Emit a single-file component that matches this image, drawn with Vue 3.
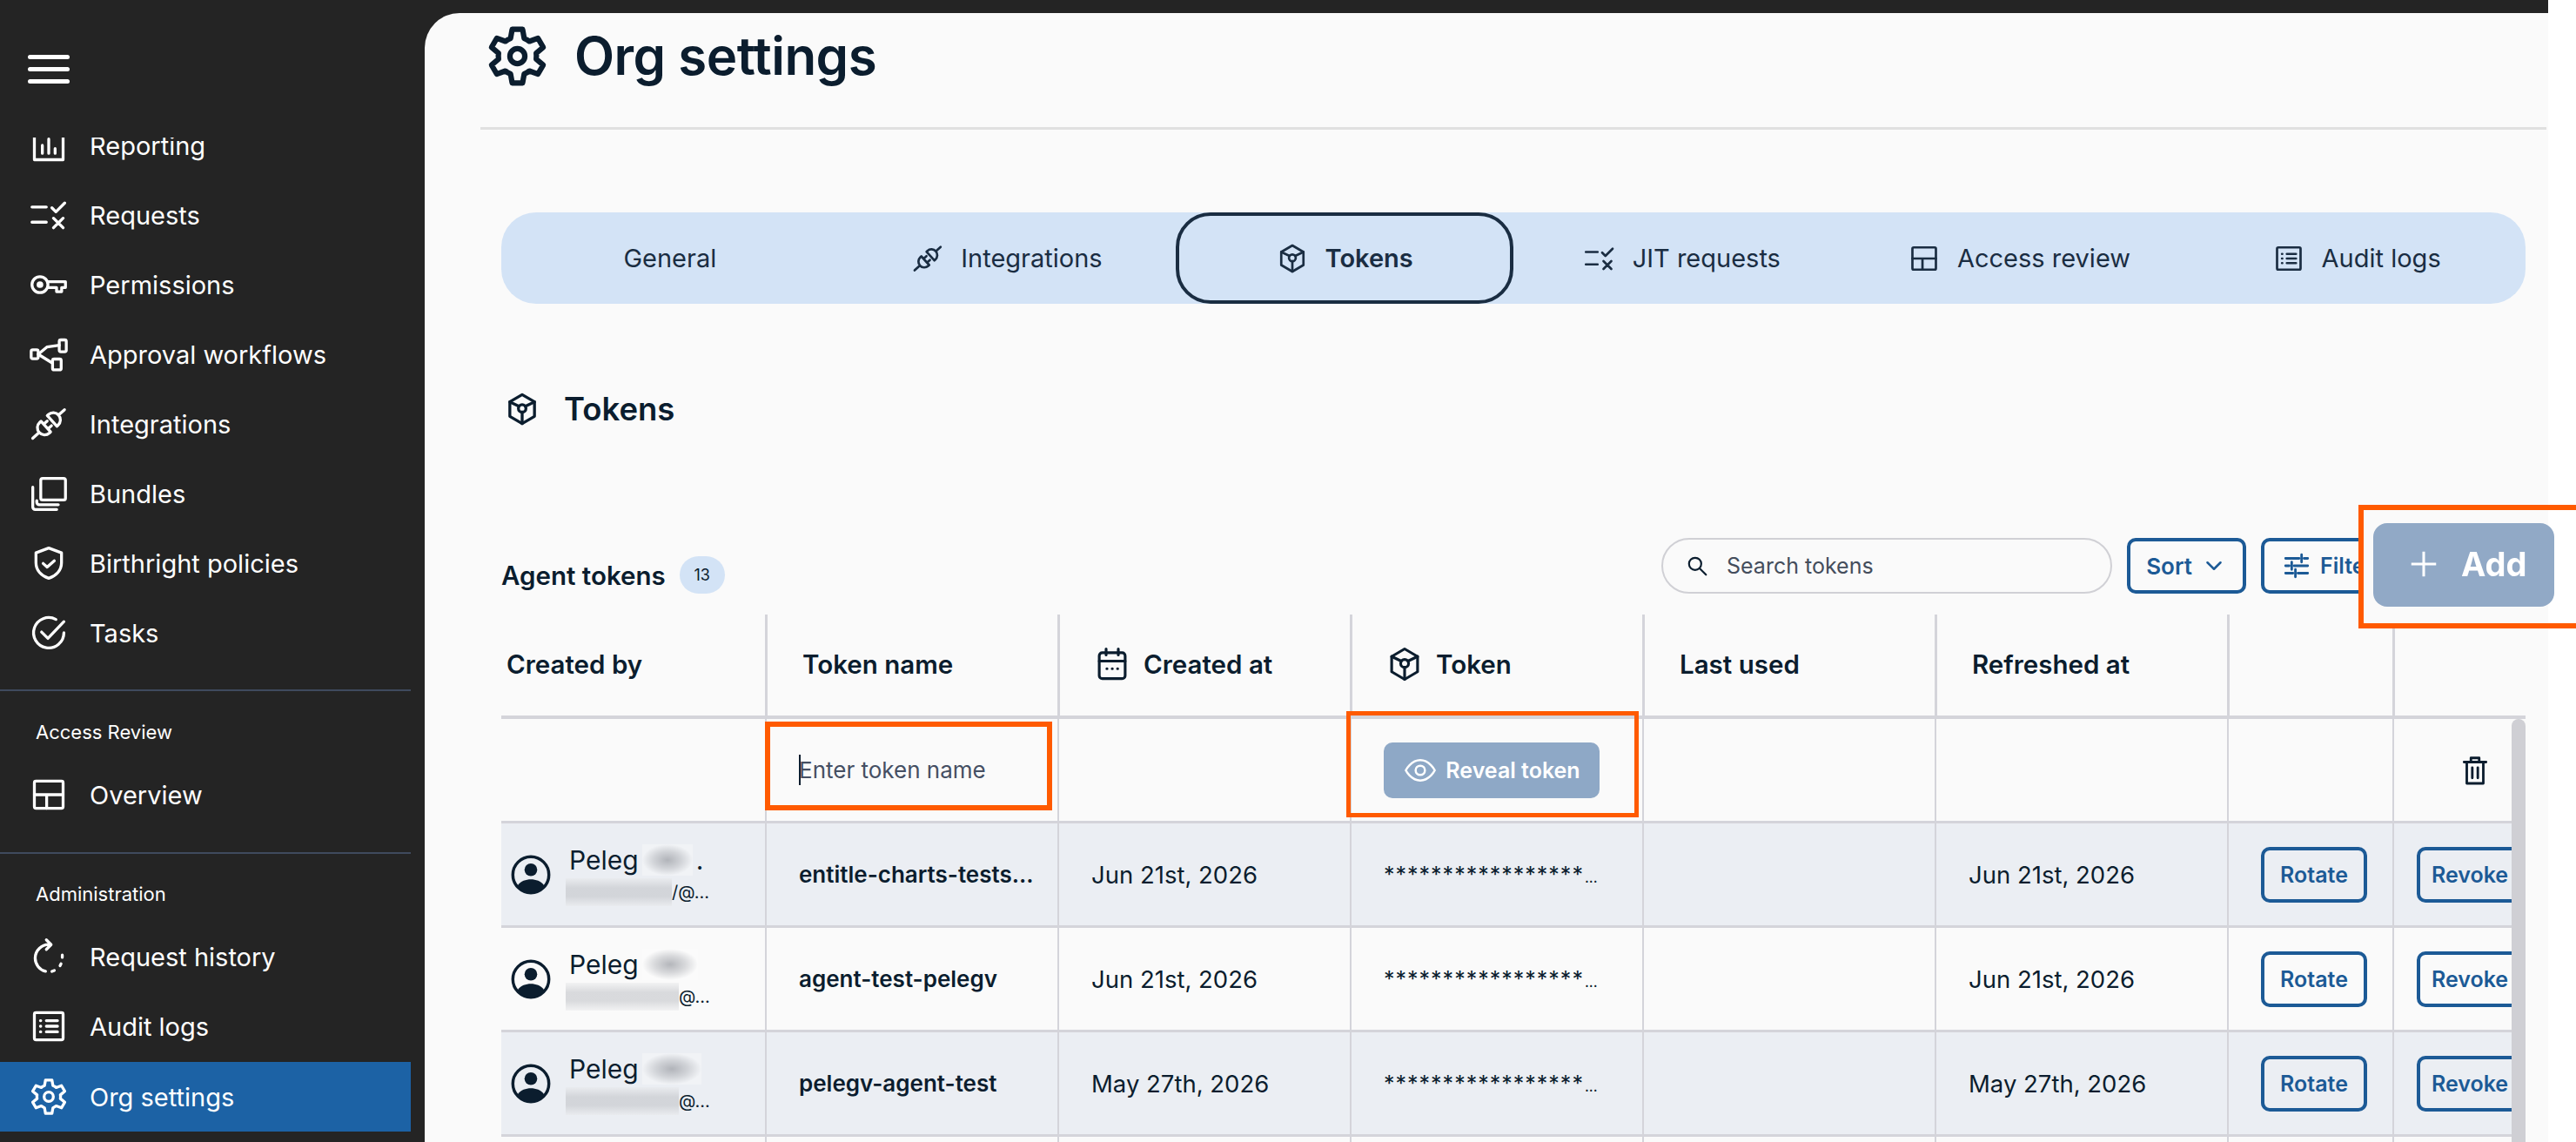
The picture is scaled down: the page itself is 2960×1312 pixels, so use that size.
<template>
  <div class="app">
    <aside class="sidebar">
      <div class="burger"><span></span><span></span><span></span></div>
      <nav class="nav">
        <a v-for="item in mainNav" :key="item.label" class="nav-item">
          <svg class="nav-icon" viewBox="0 0 24 24" v-html="icons[item.icon]"></svg>
          <span>{{ item.label }}</span>
        </a>
        <div class="nav-line first"></div>
        <div class="nav-title">Access Review</div>
        <a class="nav-item">
          <svg class="nav-icon" viewBox="0 0 24 24" v-html="icons.layout"></svg>
          <span>Overview</span>
        </a>
        <div class="nav-line"></div>
        <div class="nav-title admin">Administration</div>
        <a v-for="item in adminNav" :key="item.label" class="nav-item" :class="{ active: item.active }">
          <svg class="nav-icon" viewBox="0 0 24 24" v-html="icons[item.icon]"></svg>
          <span>{{ item.label }}</span>
        </a>
      </nav>
    </aside>

    <div class="shell">
      <main class="main">
        <header class="page-head">
          <svg class="page-gear" viewBox="0 0 24 24" v-html="icons.gear"></svg>
          <h1>Org settings</h1>
        </header>

        <div class="tabs">
          <div v-for="tab in tabs" :key="tab.label" class="tab" :class="{ active: tab.active }">
            <svg v-if="tab.icon" class="tab-icon" viewBox="0 0 24 24" v-html="icons[tab.icon]"></svg>
            <span>{{ tab.label }}</span>
          </div>
        </div>

        <div class="section-head">
          <svg viewBox="0 0 24 24" v-html="icons.cube"></svg>
          <h2>Tokens</h2>
        </div>

        <div class="toolbar">
          <div class="toolbar-title">
            <span>Agent tokens</span>
            <span class="count">13</span>
          </div>
          <div class="toolbar-actions">
            <div class="search">
              <svg viewBox="0 0 24 24" v-html="icons.search"></svg>
              <span>Search tokens</span>
            </div>
            <button class="btn sort">Sort <svg viewBox="0 0 24 24" v-html="icons.chevron"></svg></button>
            <button class="btn filter"><svg viewBox="0 0 24 24" v-html="icons.sliders"></svg>Filter</button>
          </div>
          <div class="add-mark">
            <button class="add-btn"><svg viewBox="0 0 24 24" v-html="icons.plus"></svg>Add</button>
          </div>
        </div>

        <div class="table">
          <div class="thead">
            <div class="th first">Created by</div>
            <div class="th">Token name</div>
            <div class="th icon-th"><svg viewBox="0 0 24 24" v-html="icons.calendar"></svg>Created at</div>
            <div class="th icon-th"><svg viewBox="0 0 24 24" v-html="icons.cube"></svg>Token</div>
            <div class="th">Last used</div>
            <div class="th">Refreshed at</div>
            <div class="th"></div>
            <div class="th"></div>
          </div>

          <div class="tbody">
            <div class="row">
              <div class="td"></div>
              <div class="td pad">
                <span class="mark name-mark"></span>
                <span class="caret"></span>
                <span class="placeholder">Enter token name</span>
              </div>
              <div class="td"></div>
              <div class="td pad">
                <span class="mark reveal-mark"></span>
                <button class="reveal"><svg viewBox="0 0 24 24" v-html="icons.eye"></svg>Reveal token</button>
              </div>
              <div class="td"></div>
              <div class="td"></div>
              <div class="td"></div>
              <div class="td trash-cell"><svg viewBox="0 0 24 24" v-html="icons.trash"></svg></div>
            </div>

            <div v-for="(row, i) in rows" :key="row.token" class="row" :class="{ tint: i % 2 === 0 }">
              <div class="td user">
                <svg class="avatar" viewBox="0 0 24 24" v-html="icons.avatar"></svg>
                <div class="user-text">
                  <div class="user-name">
                    <span>Peleg</span>
                    <i class="blur" :style="{ width: row.nameBlur + 'px' }"></i>
                    <span v-if="row.dot">.</span>
                  </div>
                  <div class="user-mail">
                    <i class="blur wide" :style="{ width: row.mailBlur + 'px' }"></i>
                    <span>{{ row.mail }}</span>
                  </div>
                </div>
              </div>
              <div class="td pad token-name">{{ row.token }}</div>
              <div class="td pad date">{{ row.date }}</div>
              <div class="td pad masked">*****************<em>...</em></div>
              <div class="td"></div>
              <div class="td pad date">{{ row.date }}</div>
              <div class="td pad"><button class="btn row-btn">Rotate</button></div>
              <div class="td revoke-cell"><button class="btn row-btn">Revoke</button></div>
            </div>

            <div class="row tail">
              <div v-for="n in 8" :key="n" class="td"></div>
            </div>

            <div class="scrollbar"></div>
          </div>
        </div>
      </main>
    </div>
  </div>
</template>

<script setup>
// six-toothed gear, same outline in the sidebar and the page title
const gearPath = () => {
  const pt = (r, deg) => {
    const a = (deg * Math.PI) / 180
    return `${(12 + r * Math.cos(a)).toFixed(2)} ${(12 + r * Math.sin(a)).toFixed(2)}`
  }
  let d = ''
  for (let i = 0; i < 6; i++) {
    const a = -90 + i * 60
    d += `${i ? 'A7.4 7.4 0 0 1 ' : 'M'}${pt(7.4, a - 21)}L${pt(10.6, a - 11)}L${pt(10.6, a + 11)}L${pt(7.4, a + 21)}`
  }
  return d + 'A7.4 7.4 0 0 1 ' + pt(7.4, -111) + 'Z'
}

const icons = {
  report: '<path d="M3 3v18h18V3M8 12v5M12 8v9M16 14v3"/>',
  requests: '<path d="M1.5 7h9M1.5 16.5h9M14 7.5l2.5 2.5L22 4.5M15 14l6 6M21 14l-6 6"/>',
  key: '<circle cx="6.5" cy="12" r="5"/><circle cx="6.5" cy="12" r="1.2" fill="currentColor"/><path d="M11.5 10.2h11v3.6h-2.4v2.6h-3.2v-2.6h-5.4"/>',
  workflow: '<rect x="1" y="9.2" width="4.4" height="5.6" rx="1"/><rect x="18.6" y="3" width="4.4" height="7.4" rx="1"/><rect x="14.4" y="15" width="5.4" height="6.8" rx="1"/><path d="M5.4 12l5.6-4.6 7.6-1M5.4 12l9 5.6"/>',
  plug: '<g transform="rotate(-42 12 12)"><path d="M9.5 7.5H8.5a4.5 4.5 0 0 0 0 9h1zM9.5 10h3M9.5 14h3M4 12H-1.5M14.8 7.5h1a4.5 4.5 0 0 1 0 9h-1zM20.3 12h5"/></g>',
  bundles: '<rect x="7" y="2.5" width="15.5" height="13.5" rx="1.2"/><path d="M2 8v12.5A1.5 1.5 0 0 0 3.5 22H17M4.5 16.5v1A1.5 1.5 0 0 0 6 19h12"/>',
  shield: '<path d="M12 2.5l8 3v6.2c0 4.8-3.4 8.4-8 9.800-4.600-1.400-8-5-8-9.800V5.500z"/><path d="M8.500 12.200l2.500 2.300 4.500-4"/>',
  tasks: '<path d="M21.500 12a9.500 9.500 0 1 1-5-8.400"/><path d="M7.500 11.500l4 4L21.500 5"/>',
  layout: '<rect x="3" y="3.500" width="18" height="17" rx="1"/><path d="M3 12h18M10.700 12v8.500"/>',
  history: '<path d="M12.500 4.500A8.500 8.500 0 0 0 3.500 13a8.500 8.500 0 0 0 6.500 8.200M10.500 1.500l3 3-3 3M20.500 11v1.500M19.700 16.500l-.6 1.200M15.500 20.700l-1.500.6"/>',
  audit: '<rect x="3" y="3.500" width="18" height="17" rx="1"/><path d="M10.500 8.500h7M10.500 12h7M10.500 15.500h7M6.800 8.500h.2M6.800 12h.2M6.800 15.500h.2"/>',
  gear: `<path d="${gearPath()}"/><circle cx="12" cy="12" r="2.900"/>`,
  cube: '<path d="M12 2l8.500 5v10L12 22l-8.500-5V7z"/><circle cx="12" cy="11.500" r="2.600"/><path d="M3.500 7l6.300 3M20.500 7l-6.300 3M12 14.100V22"/>',
  search: '<circle cx="10" cy="10" r="6.500"/><path d="M15 15l6.500 6.500"/>',
  chevron: '<path d="M6 9l6 6 6-6"/>',
  sliders: '<path d="M3 6h11M18 6h3M16 3v6M3 12h3M10 12h11M8 9v6M3 18h6M13 18h8M11 15v6"/>',
  plus: '<path d="M12 3v18M3 12h18"/>',
  calendar: '<rect x="3.500" y="4.500" width="17" height="17" rx="2"/><path d="M3.500 10h17M8 2v4M16 2v4M8.500 15h.1M12 15h.1M15.500 15h.1"/>',
  eye: '<path d="M2 12s3.600-7 10-7 10 7 10 7-3.600 7-10 7-10-7-10-7z"/><circle cx="12" cy="12" r="3.200"/>',
  trash: '<path d="M4 6h16M9 6V3h6v3M6 6v15.500h12V6M10 10v7.500M14 10v7.500"/>',
  avatar: '<circle cx="12" cy="12" r="10.800"/><circle cx="12" cy="9" r="3.800" fill="currentColor" stroke="none"/><path fill="currentColor" stroke="none" d="M4 18.500C6 15.800 9 14.800 12 14.800s6 1 8 3.700A10.500 10.500 0 0 1 12 22.800a10.500 10.500 0 0 1-8-4.300z"/>',
}

const mainNav = [
  { label: 'Reporting', icon: 'report' },
  { label: 'Requests', icon: 'requests' },
  { label: 'Permissions', icon: 'key' },
  { label: 'Approval workflows', icon: 'workflow' },
  { label: 'Integrations', icon: 'plug' },
  { label: 'Bundles', icon: 'bundles' },
  { label: 'Birthright policies', icon: 'shield' },
  { label: 'Tasks', icon: 'tasks' },
]

const adminNav = [
  { label: 'Request history', icon: 'history' },
  { label: 'Audit logs', icon: 'audit' },
  { label: 'Org settings', icon: 'gear', active: true },
]

const tabs = [
  { label: 'General' },
  { label: 'Integrations', icon: 'plug' },
  { label: 'Tokens', icon: 'cube', active: true },
  { label: 'JIT requests', icon: 'requests' },
  { label: 'Access review', icon: 'layout' },
  { label: 'Audit logs', icon: 'audit' },
]

const rows = [
  { token: 'entitle-charts-tests...', date: 'Jun 21st, 2026', nameBlur: 58, mailBlur: 122, mail: '/@...', dot: true },
  { token: 'agent-test-pelegv', date: 'Jun 21st, 2026', nameBlur: 64, mailBlur: 130, mail: '@...' },
  { token: 'pelegv-agent-test', date: 'May 27th, 2026', nameBlur: 68, mailBlur: 130, mail: '@...' },
]
</script>

<style>
body {
  margin: 0;
  background: #fff;
}
</style>

<style scoped>
.app {
  display: flex;
  width: 2960px;
  height: 1312px;
  overflow: hidden;
  background: #fff;
  color: #0b1d2e;
  font-family: Inter, "Noto Sans", sans-serif;
}
svg {
  fill: none;
  stroke: currentColor;
  stroke-width: 1.8;
  stroke-linecap: round;
  stroke-linejoin: round;
  flex: none;
}
button {
  font-family: inherit;
  padding: 0;
  cursor: pointer;
}

/* sidebar */
.sidebar {
  width: 488px;
  flex: none;
  display: flex;
  flex-direction: column;
  background: #242424;
  color: #fff;
}
.burger {
  flex: none;
  height: 158px;
  box-sizing: border-box;
  padding: 63px 0 0 32px;
  display: flex;
  flex-direction: column;
  gap: 9px;
}
.burger span {
  display: block;
  width: 48px;
  height: 5px;
  border-radius: 3px;
  background: #fff;
}
.nav {
  flex: 1;
  min-height: 0;
  overflow: hidden;
  width: 472px;
}
.nav-item {
  display: flex;
  align-items: center;
  height: 80px;
  padding-left: 34px;
  font-size: 29px;
  font-weight: 400;
}
.nav-item:first-child {
  margin-top: -31px;
}
.nav-item.active {
  margin-top: 1px;
  background: #1c62a5;
}
.nav-icon {
  width: 44px;
  height: 44px;
  margin-right: 25px;
}
.nav-line {
  height: 2px;
  margin-top: 26px;
  background: #3f4a5e;
}
.nav-line.first {
  margin-top: 25px;
}
.nav-title {
  height: 32px;
  line-height: 32px;
  margin: 31px 0 16px 41px;
  font-size: 22px;
}
.nav-title.admin {
  margin-top: 30px;
}

/* main */
.shell {
  width: 2440px;
  flex: none;
  padding-top: 15px;
  box-sizing: border-box;
  background: #242424;
}
.main {
  height: 1297px;
  background: #fafafa;
  border-top-left-radius: 40px;
}
.page-head {
  display: flex;
  align-items: center;
  gap: 30px;
  height: 134px;
  box-sizing: border-box;
  margin: 0 2px 0 64px;
  padding: 14px 0 47px 7px;
  border-bottom: 3px solid #e0e0e0;
}
.page-gear {
  width: 71px;
  height: 71px;
  stroke-width: 2.1;
}
.page-head h1 {
  margin: 0;
  font-size: 60px;
  font-weight: 600;
  letter-spacing: -0.5px;
}
.tabs {
  display: grid;
  grid-template-columns: repeat(6, 1fr);
  width: 2326px;
  height: 105px;
  margin: 95px 0 0 88px;
  border-radius: 40px;
  background: #d3e3f6;
  color: #1a2d42;
}
.tab {
  display: flex;
  align-items: center;
  justify-content: center;
  gap: 20px;
  font-size: 29px;
  border-radius: 40px;
}
.tab.active {
  border: 4px solid #1a2d42;
  font-weight: 600;
  box-sizing: border-box;
}
.tab-icon {
  width: 36px;
  height: 36px;
}
.section-head {
  display: flex;
  align-items: center;
  gap: 28px;
  height: 60px;
  margin: 91px 0 0 92px;
}
.section-head svg {
  width: 40px;
  height: 40px;
  stroke-width: 2;
}
.section-head h2 {
  margin: 0;
  font-size: 36.500px;
  font-weight: 600;
}

/* toolbar */
.toolbar {
  position: relative;
  display: flex;
  justify-content: space-between;
  width: 2326px;
  height: 64px;
  margin: 118px 0 0 88px;
}
.toolbar-title {
  align-self: flex-end;
  display: flex;
  align-items: center;
  gap: 16px;
  height: 43px;
  font-size: 29.500px;
  font-weight: 600;
}
.count {
  width: 52px;
  height: 43px;
  line-height: 43px;
  border-radius: 22px;
  background: #d3e3f6;
  text-align: center;
  font-size: 18px;
  font-weight: 400;
}
.toolbar-actions {
  display: flex;
  gap: 17px;
  margin-right: 144px;
}
.search {
  display: flex;
  align-items: center;
  gap: 21px;
  width: 518px;
  box-sizing: border-box;
  padding-left: 26px;
  border: 2px solid #d0d0d5;
  border-radius: 32px;
  font-size: 25px;
  color: #444d5c;
}
.search svg {
  width: 26px;
  height: 26px;
  color: #0b1d2e;
  stroke-width: 2;
}
.btn {
  box-sizing: border-box;
  border: 4px solid #1c5a96;
  border-radius: 10px;
  background: transparent;
  color: #1c5a96;
  font-size: 25px;
  font-weight: 600;
}
.sort {
  display: flex;
  align-items: center;
  justify-content: center;
  gap: 10px;
  width: 137px;
  font-size: 26px;
}
.sort svg {
  width: 30px;
  height: 30px;
  stroke-width: 2;
}
.filter {
  display: flex;
  align-items: center;
  gap: 10px;
  width: 160px;
  padding-left: 20px;
}
.filter svg {
  width: 34px;
  height: 34px;
  stroke-width: 2;
}
.add-mark {
  position: absolute;
  left: 2134px;
  top: -38px;
  width: 260px;
  height: 142px;
  box-sizing: border-box;
  padding: 15px 0 0 11px;
  border: 6px solid #ff5a00;
  background: linear-gradient(to right, #fafafa 212px, #fff 212px);
  z-index: 3;
}
.add-btn {
  display: flex;
  align-items: center;
  gap: 24px;
  width: 208px;
  height: 96px;
  box-sizing: border-box;
  padding: 0 0 3px 39px;
  border: 0;
  border-radius: 16px;
  background: #91a9c6;
  color: #fff;
  font-size: 38px;
  font-weight: 700;
  filter: blur(0.7px);
}
.add-btn svg {
  width: 38px;
  height: 38px;
  stroke-width: 1.900;
  stroke-linecap: butt;
}

/* table */
.table {
  width: 2326px;
  margin: 24px 0 0 88px;
}
.thead,
.row {
  display: grid;
  grid-template-columns: 303px repeat(5, 336px) 190px 137px;
}
.thead {
  grid-template-columns: 303px repeat(5, 336px) 190px 153px;
  height: 120px;
  box-sizing: border-box;
  padding-bottom: 0;
  border-bottom: 4px solid #d4d4da;
}
.th {
  display: flex;
  align-items: center;
  gap: 15px;
  padding: 0 0 2px 40px;
  border-left: 3px solid #d4d4da;
  font-size: 29.500px;
  font-weight: 600;
}
.th.first {
  padding-left: 6px;
  border-left: 0;
}
.icon-th {
  padding-left: 39px;
}
.icon-th svg {
  width: 42px;
  height: 42px;
}
.tbody {
  position: relative;
}
.row {
  width: 2310px;
  height: 120px;
  box-sizing: border-box;
  border-bottom: 3px solid #d4d4da;
}
.row.tint {
  background: #ebeef3;
}
.row.tail {
  border-bottom: 0;
}
.td {
  position: relative;
  display: flex;
  align-items: center;
  min-width: 0;
  border-left: 2px solid #d4d4da;
  font-size: 28px;
}
.td:first-child {
  border-left: 0;
}
.td.pad {
  padding-left: 37px;
}
.date {
  font-size: 27.500px;
}
.mark {
  position: absolute;
  box-sizing: border-box;
  z-index: 2;
}
.name-mark {
  left: -2px;
  top: 3px;
  width: 330px;
  height: 102px;
  border: 6px solid #ff5a00;
}
.reveal-mark {
  left: -6px;
  top: -9px;
  width: 336px;
  height: 122px;
  border: 5px solid #ff5a00;
}
.caret {
  width: 2px;
  height: 35px;
  background: #0b1d2e;
  margin-right: -2px;
}
.placeholder {
  font-size: 26px;
  color: #454f63;
}
.reveal {
  display: flex;
  align-items: center;
  justify-content: center;
  gap: 9px;
  width: 248px;
  height: 64px;
  border: 0;
  border-radius: 10px;
  background: #8ea8c6;
  color: #fff;
  font-size: 25px;
  font-weight: 600;
}
.reveal svg {
  width: 40px;
  height: 40px;
  stroke-width: 1.500;
}
.trash-cell {
  padding-left: 74px;
}
.trash-cell svg {
  width: 38px;
  height: 38px;
}
.user {
  padding-left: 11px;
  gap: 21px;
}
.avatar {
  width: 46px;
  height: 46px;
}
.user-text {
  display: flex;
  flex-direction: column;
  gap: 6px;
}
.user-name {
  display: flex;
  align-items: center;
  gap: 4px;
  height: 34px;
  font-size: 30px;
}
.user-mail {
  display: flex;
  align-items: center;
  height: 28px;
  margin-left: -4px;
  font-size: 20px;
}
/* the redacted bits of the names and mails */
.blur {
  display: block;
  height: 36px;
  background: radial-gradient(ellipse closest-side, rgba(150, 153, 160, 0.7), rgba(150, 153, 160, 0.35) 55%, rgba(150, 153, 160, 0)), rgba(255, 255, 255, 0.3);
}
.blur.wide {
  height: 32px;
  background: linear-gradient(to bottom, rgba(165, 168, 175, 0.1), rgba(165, 168, 175, 0.4) 35%, rgba(165, 168, 175, 0.4) 65%, rgba(165, 168, 175, 0.1)), rgba(255, 255, 255, 0.3);
}
.token-name {
  font-size: 26px;
  font-weight: 600;
}
.masked {
  font-size: 25px;
  letter-spacing: 1px;
}
.masked em {
  font-style: normal;
  font-size: 17px;
  letter-spacing: 0;
  margin-left: 1px;
  align-self: center;
  padding-top: 6px;
}
.row-btn {
  width: 122px;
  height: 64px;
  flex: none;
}
.revoke-cell {
  overflow: hidden;
  padding-left: 26px;
}
.scrollbar {
  position: absolute;
  top: 0;
  right: 0;
  bottom: 0;
  width: 16px;
  border-radius: 8px 8px 0 0;
  background: #cfcfd4;
}
</style>
